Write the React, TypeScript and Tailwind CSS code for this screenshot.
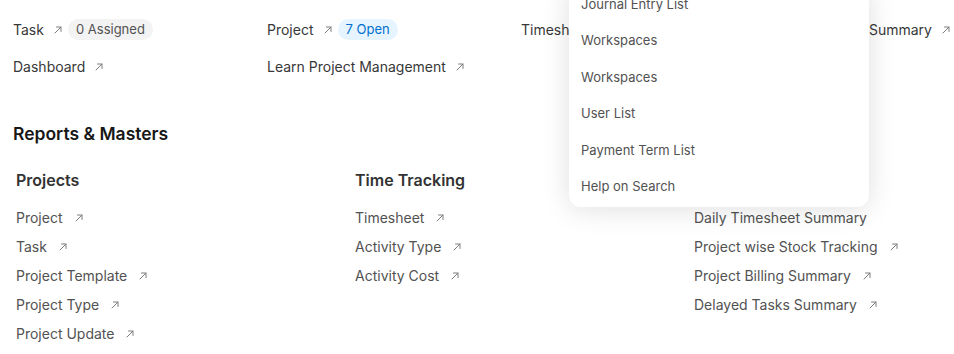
import React from 'react';

const font = { fontFamily: 'Inter, "Noto Sans", sans-serif' };

function Arrow({ className = '' }: { className?: string }) {
  return (
    <svg width="10" height="10" viewBox="0 0 10 10" fill="none" className={className}>
      <path d="M2 8L8 2M3.5 2H8V6.5" stroke="currentColor" strokeWidth="1" strokeLinecap="round" strokeLinejoin="round" />
    </svg>
  );
}

type Shortcut = { label: string; badge?: { text: string; tone: 'gray' | 'blue' } };

const shortcuts: Shortcut[] = [
  { label: 'Task', badge: { text: '0 Assigned', tone: 'gray' } },
  { label: 'Project', badge: { text: '7 Open', tone: 'blue' } },
  { label: 'Timesheet' },
  { label: 'Project Billing Summary' },
  { label: 'Dashboard' },
  { label: 'Learn Project Management' },
];

const cards: { title: string; links: { label: string; arrow?: boolean }[] }[] = [
  {
    title: 'Projects',
    links: [
      { label: 'Project', arrow: true },
      { label: 'Task', arrow: true },
      { label: 'Project Template', arrow: true },
      { label: 'Project Type', arrow: true },
      { label: 'Project Update', arrow: true },
    ],
  },
  {
    title: 'Time Tracking',
    links: [
      { label: 'Timesheet', arrow: true },
      { label: 'Activity Type', arrow: true },
      { label: 'Activity Cost', arrow: true },
    ],
  },
  {
    title: 'Reports',
    links: [
      { label: 'Daily Timesheet Summary' },
      { label: 'Project wise Stock Tracking', arrow: true },
      { label: 'Project Billing Summary', arrow: true },
      { label: 'Delayed Tasks Summary', arrow: true },
    ],
  },
];

const searchItems = ['Journal Entry List', 'Workspaces', 'Workspaces', 'User List', 'Payment Term List', 'Help on Search'];

export default function App() {
  return (
    <div className="relative h-[354px] w-[954px] overflow-hidden bg-white" style={font}>
      {/* shortcuts */}
      <div className="grid grid-cols-[repeat(4,254px)] pl-[13px] pt-[11px]">
        {shortcuts.map((s) => (
          <div key={s.label} className="flex h-[37px] items-center text-[14px] text-[#383838]">
            <span>{s.label}</span>
            <Arrow className="ml-[9px] text-[#7c7c7c]" />
            {s.badge && (
              <span
                className={
                  s.badge.tone === 'gray'
                    ? 'ml-[5px] rounded-full bg-[#f3f3f3] px-[8px] py-[1px] text-[13px] text-[#525252]'
                    : 'ml-[5px] rounded-full bg-[#e6f4ff] px-[8px] py-[1px] text-[13px] text-[#0070cc]'
                }
              >
                {s.badge.text}
              </span>
            )}
          </div>
        ))}
      </div>

      <h2 className="ml-[13px] mt-[37px] text-[17.5px] font-semibold leading-6 text-[#171717]">Reports &amp; Masters</h2>

      {/* link cards */}
      <div className="mt-[22px] grid grid-cols-[repeat(3,339px)] pl-[16px]">
        {cards.map((c) => (
          <div key={c.title}>
            <div className="text-[16px] font-semibold leading-6 text-[#333333]">{c.title}</div>
            <div className="mt-[11px] flex flex-col">
              {c.links.map((l) => (
                <div key={l.label} className="flex h-[29px] items-center text-[14px] text-[#525252]">
                  <span>{l.label}</span>
                  {l.arrow && <Arrow className="ml-[11px] text-[#7c7c7c]" />}
                </div>
              ))}
            </div>
          </div>
        ))}
      </div>

      {/* search dropdown */}
      <div className="absolute left-[569px] top-[-16px] w-[300px] rounded-xl bg-white py-[2px] shadow-[0_2px_28px_rgba(0,0,0,0.13)]">
        {searchItems.map((item, i) => (
          <div key={i} className="flex h-[36.5px] items-center px-3 text-[13px] text-[#525252]">
            {item}
          </div>
        ))}
      </div>
    </div>
  );
}
